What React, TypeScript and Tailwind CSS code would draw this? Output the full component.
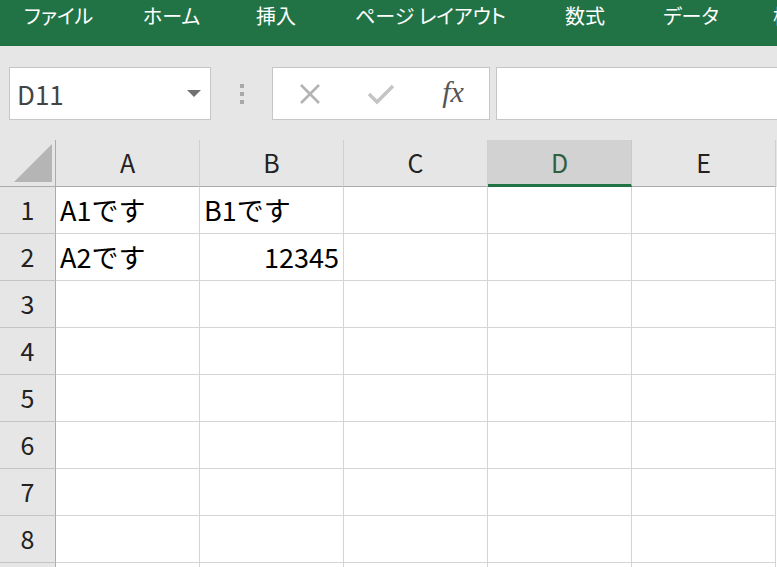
import React from "react";

// ribbon tabs with the slot width each one takes in the bar
const tabs: [string, string][] = [
  ["ファイル", "w-[119px]"],
  ["ホーム", "w-[113px]"],
  ["挿入", "w-[99px]"],
  ["ページ レイアウト", "w-[210px]"],
  ["数式", "w-[98px]"],
  ["データ", "w-[110px]"],
  ["校閲", "w-[80px]"],
];
const cols = ["A", "B", "C", "D", "E"];
const rows = [1, 2, 3, 4, 5, 6, 7, 8, 9];

const cells: Record<string, { text: string; right?: boolean }> = {
  "A1": { text: "A1です" },
  "B1": { text: "B1です" },
  "A2": { text: "A2です" },
  "B2": { text: "12345", right: true },
};

export default function App() {
  return (
    <div className="w-[777px] h-[567px] overflow-hidden bg-[#e6e6e6] font-['Noto_Sans_CJK_JP',sans-serif]">
      {/* ribbon tabs */}
      <div className="h-[46px] bg-[#217346] flex items-start pt-[2px] pl-[24px] text-white text-[20px] leading-[28px] whitespace-nowrap [font-feature-settings:'palt']">
        {tabs.map(([t, w]) => (
          <span key={t} className={w + " shrink-0"}>
            {t}
          </span>
        ))}
      </div>

      {/* formula bar */}
      <div className="h-[94px] flex items-start pt-[21px] pl-[9px]">
        <div className="w-[202px] h-[53px] shrink-0 bg-white border border-[#c6c6c6] flex items-center justify-between pl-[7px] pr-[9px]">
          <span className="text-[26px] text-[#444] leading-none">D11</span>
          <svg width="14" height="7" viewBox="0 0 14 7">
            <polygon points="0,0 14,0 7,7" fill="#707070" />
          </svg>
        </div>
        <div className="w-[61px] h-[53px] shrink-0 flex flex-col items-center justify-center gap-[4px] pl-[1px]">
          <span className="w-[4px] h-[4px] bg-[#a8a8a8]" />
          <span className="w-[4px] h-[4px] bg-[#a8a8a8]" />
          <span className="w-[4px] h-[4px] bg-[#a8a8a8]" />
        </div>
        <div className="w-[218px] h-[53px] shrink-0 bg-white border border-[#c6c6c6] flex items-center">
          <div className="w-[72px] flex justify-center pl-[2px]">
            <svg width="24" height="24" viewBox="0 0 24 24">
              <path d="M3 3 L21 21 M21 3 L3 21" stroke="#b3b3b3" strokeWidth="2.6" fill="none" />
            </svg>
          </div>
          <div className="w-[72px] flex justify-center">
            <svg width="28" height="22" viewBox="0 0 28 22">
              <path d="M2 11 L10 19 L26 3" stroke="#c4c4c4" strokeWidth="3.4" fill="none" />
            </svg>
          </div>
          <div className="w-[72px] flex justify-center">
            <span className="font-['Liberation_Serif',serif] italic text-[30px] leading-none text-[#555] pb-[4px]">fx</span>
          </div>
        </div>
        <div className="w-[320px] h-[53px] shrink-0 ml-[6px] bg-white border border-[#c6c6c6]" />
      </div>

      {/* column headers */}
      <div className="flex h-[47px]">
        <div className="w-[56px] h-[47px] shrink-0 border-r border-b border-[#ababab]">
          <svg width="55" height="46" viewBox="0 0 55 46">
            <polygon points="52,4 52,42 14,42" fill="#b5b5b5" />
          </svg>
        </div>
        {cols.map((c) =>
          c === "D" ? (
            <div
              key={c}
              className="w-[144px] h-[47px] shrink-0 bg-[#d2d2d2] border-r border-[#c8c8c8] border-b-[3px] border-b-[#217346] flex items-center justify-center text-[25px] text-[#2f5f3f] pt-[2px]"
            >
              {c}
            </div>
          ) : (
            <div
              key={c}
              className="w-[144px] h-[47px] shrink-0 border-r border-[#d0d0d0] border-b border-b-[#ababab] flex items-center justify-center text-[25px] text-[#222]"
            >
              {c}
            </div>
          )
        )}
      </div>

      {/* rows */}
      {rows.map((r) => (
        <div key={r} className="flex h-[47px]">
          <div className="w-[56px] h-[47px] shrink-0 border-r border-b border-r-[#ababab] border-b-[#c4c4c4] flex items-center justify-center text-[25px] text-[#222]">
            {r < 9 ? r : ""}
          </div>
          {cols.map((c) => {
            const cell = cells[c + r];
            return (
              <div
                key={c}
                className={
                  "w-[144px] h-[47px] shrink-0 bg-white border-r border-b border-[#d4d4d4] flex items-center text-[27px] text-black px-[4px] pt-[1px] whitespace-nowrap " +
                  (cell?.right ? "justify-end" : "justify-start")
                }
              >
                {cell?.text}
              </div>
            );
          })}
          <div className="flex-1 h-[47px] bg-white" />
        </div>
      ))}
    </div>
  );
}
